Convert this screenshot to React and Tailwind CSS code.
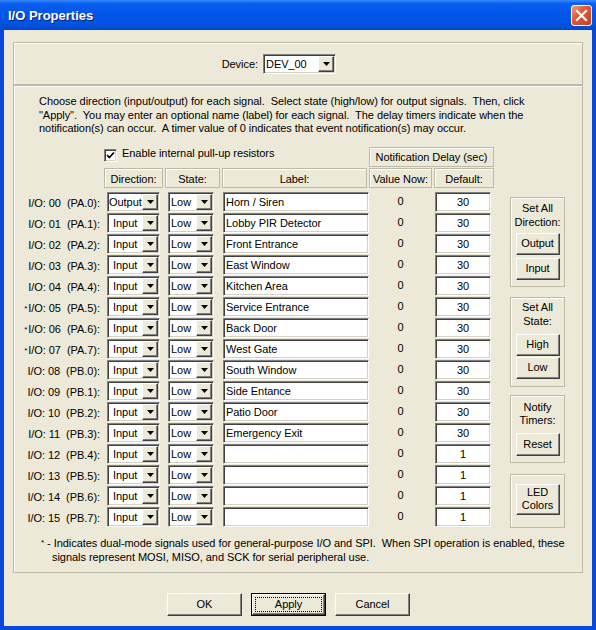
import React from "react";

const sunken =
  "border border-t-[#808080] border-l-[#808080] border-b-white border-r-white shadow-[inset_1px_1px_0_#404040,inset_-1px_-1px_0_#d4d0c8]";
const raised =
  "bg-[#ECE9D8] border border-t-white border-l-white border-b-[#404040] border-r-[#404040] shadow-[inset_-1px_-1px_0_#808080,inset_1px_1px_0_#ece9d8]";
const etched = "border border-[#BCB9A7] shadow-[inset_1px_1px_0_#ffffff]";

function Arrow() {
  return (
    <svg width="7" height="4" viewBox="0 0 7 4">
      <path d="M0 0h7l-3.5 4z" fill="#000" />
    </svg>
  );
}

function Combo({ w, text, pl }) {
  return (
    <div className={`${w} h-[20px] flex bg-white ${sunken}`}>
      <div className={`flex-1 overflow-hidden whitespace-nowrap leading-[19px] ${pl}`}>{text}</div>
      <div className={`w-[16px] h-[16px] mt-[1px] mr-[1px] flex items-center justify-center ${raised}`}>
        <Arrow />
      </div>
    </div>
  );
}

function TextBox({ w, text, extra }) {
  return (
    <div className={`${w} h-[20px] bg-white whitespace-nowrap overflow-hidden leading-[18px] ${sunken} ${extra}`}>
      {text}
    </div>
  );
}

function Btn({ cls, children }) {
  return <div className={`flex items-center justify-center text-center ${raised} ${cls}`}>{children}</div>;
}

const rows = [
  ["00", "PA.0", "Output", "Horn / Siren", "30", false],
  ["01", "PA.1", "Input", "Lobby PIR Detector", "30", false],
  ["02", "PA.2", "Input", "Front Entrance", "30", false],
  ["03", "PA.3", "Input", "East Window", "30", false],
  ["04", "PA.4", "Input", "Kitchen Area", "30", false],
  ["05", "PA.5", "Input", "Service Entrance", "30", true],
  ["06", "PA.6", "Input", "Back Door", "30", true],
  ["07", "PA.7", "Input", "West Gate", "30", true],
  ["08", "PB.0", "Input", "South Window", "30", false],
  ["09", "PB.1", "Input", "Side Entance", "30", false],
  ["10", "PB.2", "Input", "Patio Door", "30", false],
  ["11", "PB.3", "Input", "Emergency Exit", "30", false],
  ["12", "PB.4", "Input", "", "1", false],
  ["13", "PB.5", "Input", "", "1", false],
  ["14", "PB.6", "Input", "", "1", false],
  ["15", "PB.7", "Input", "", "1", false],
];

const gridCols = "grid grid-cols-[88px_59px_55px_145px_63px_60px] gap-x-[2px]";

export default function App() {
  return (
    <div className="w-[596px] h-[630px] flex flex-col bg-[#ECE9D8] text-black text-[11px] tracking-[-0.05px] font-['Liberation_Sans',sans-serif]">
      {/* Title bar */}
      <div className="h-[30px] shrink-0 flex items-center justify-between pl-[8px] pr-[4px] bg-[linear-gradient(to_bottom,#3A8CFF_0%,#0A5FF0_12%,#0056E8_45%,#0053E0_80%,#0046CC_100%)]">
        <div className="text-white font-bold text-[13px] tracking-normal mt-[1px] font-['Liberation_Sans',sans-serif] [text-shadow:1px_1px_0_#0A1F74]">
          I/O Properties
        </div>
        <div className="w-[21px] h-[21px] rounded-[3px] border border-white flex items-center justify-center bg-[linear-gradient(135deg,#F39C80_0%,#E0593A_40%,#C73E20_100%)]">
          <svg width="13" height="13" viewBox="0 0 13 13">
            <path d="M2 2L11 11M11 2L2 11" stroke="#fff" strokeWidth="2.2" strokeLinecap="square" />
          </svg>
        </div>
      </div>

      {/* Body */}
      <div className="flex-1 flex flex-col border-x-4 border-b-4 border-[#0A47DB]">
        {/* Device group */}
        <div className={`mt-[12px] mx-[9px] h-[43px] flex items-center ${etched}`}>
          <div className="w-[244px] text-right pt-[2px]">Device:</div>
          <div className="ml-[5px]">
            <Combo w="w-[73px]" text="DEV_00" pl="pl-[2px]" />
          </div>
        </div>

        {/* Main group */}
        <div className={`mx-[9px] h-[488px] flex flex-col ${etched}`}>
          <div className="pl-[25px] pt-[9px] leading-[13.5px] whitespace-pre">
            <div>Choose direction (input/output) for each signal.  Select state (high/low) for output signals.  Then, click</div>
            <div>"Apply".  You may enter an optional name (label) for each signal.  The delay timers indicate when the</div>
            <div>notification(s) can occur.  A timer value of 0 indicates that event notification(s) may occur.</div>
          </div>

          <div className="mt-[11px] flex">
            {/* Table */}
            <div className="w-[478px] flex flex-col">
              <div className={`${gridCols} h-[20px]`}>
                <div className="col-start-2 col-span-3 flex items-start pt-[2px]">
                  <div className={`w-[13px] h-[13px] bg-white flex items-center justify-center ${sunken}`}>
                    <svg width="9" height="9" viewBox="0 0 9 9">
                      <path d="M1 4L3.3 6.5L8 1.5" stroke="#000" strokeWidth="1.8" fill="none" />
                    </svg>
                  </div>
                  <div className="ml-[5px] leading-[12px] -mt-[2px] whitespace-nowrap">Enable internal pull-up resistors</div>
                </div>
                <div className={`col-start-5 col-span-2 flex items-center justify-center whitespace-nowrap pt-[1px] ${etched}`}>
                  Notification Delay (sec)
                </div>
              </div>
              <div className={`${gridCols} h-[20px] mt-[1px]`}>
                <div />
                <div className={`flex items-center justify-center pt-[2px] ${etched}`}>Direction:</div>
                <div className={`flex items-center justify-center pt-[2px] ${etched}`}>State:</div>
                <div className={`flex items-center justify-center pt-[2px] ${etched}`}>Label:</div>
                <div className={`flex items-center justify-center pt-[2px] whitespace-nowrap ${etched}`}>Value Now:</div>
                <div className={`flex items-center justify-center pt-[2px] ${etched}`}>Default:</div>
              </div>

              <div className="mt-[4px] flex flex-col gap-[1px]">
                {rows.map(([n, port, dir, label, def, star]) => (
                  <div key={n} className={`${gridCols} h-[20px]`}>
                    <div className="flex items-center justify-end pr-[2px] whitespace-pre pt-[3px]">
                      {star && <span className="text-[8px] self-start mt-[3px] mr-[1px]">*</span>}
                      <span>{`I/O: ${n}  (${port}):`}</span>
                    </div>
                    <div className="pl-[3px]">
                      <Combo w="w-[53px]" text={dir} pl={dir === "Output" ? "pl-[1px]" : "pl-[5px]"} />
                    </div>
                    <div className="pl-[3px]">
                      <Combo w="w-[46px]" text="Low" pl="pl-[2px]" />
                    </div>
                    <div className="pl-[1px]">
                      <TextBox w="w-[146px]" text={label} extra="pl-[2px]" />
                    </div>
                    <div className="flex justify-center leading-[18px]">0</div>
                    <div className="pl-[1px]">
                      <TextBox w="w-[56px]" text={def} extra="text-center" />
                    </div>
                  </div>
                ))}
              </div>
            </div>

            {/* Right panel */}
            <div className="ml-[18px] mt-[50px] w-[55px] flex flex-col text-center">
              <div className={`h-[90px] flex flex-col items-center pt-[3px] ${etched}`}>
                <div className="leading-[14px]">Set All<br />Direction:</div>
                <Btn cls="mt-[4px] w-[44px] h-[22px]">Output</Btn>
                <Btn cls="mt-[3px] w-[44px] h-[22px]">Input</Btn>
              </div>
              <div className={`mt-[10px] h-[90px] flex flex-col items-center pt-[2px] ${etched}`}>
                <div className="leading-[14px]">Set All<br />State:</div>
                <Btn cls="mt-[6px] w-[44px] h-[22px]">High</Btn>
                <Btn cls="mt-[1px] w-[44px] h-[22px]">Low</Btn>
              </div>
              <div className={`mt-[8px] h-[68px] flex flex-col items-center pt-[5px] ${etched}`}>
                <div className="leading-[13px]">Notify<br />Timers:</div>
                <Btn cls="mt-[6px] w-[44px] h-[23px]">Reset</Btn>
              </div>
              <div className={`mt-[11px] h-[54px] flex flex-col items-center pt-[9px] ${etched}`}>
                <Btn cls="w-[44px] h-[31px] leading-[13px]">
                  LED
                  <br />
                  Colors
                </Btn>
              </div>
            </div>
          </div>

          <div className="mt-[8px] pl-[27px] leading-[14px] whitespace-pre">
            <div>
              <span className="text-[8px] align-top">*</span> - Indicates dual-mode signals used for general-purpose I/O and SPI.  When SPI operation is enabled, these
            </div>
            <div className="pl-[11px]">signals represent MOSI, MISO, and SCK for serial peripheral use.</div>
          </div>
        </div>

        {/* Buttons */}
        <div className="mt-[20px] flex pl-[163px]">
          <Btn cls="w-[75px] h-[23px]">OK</Btn>
          <div className="ml-[9px] w-[75px] h-[23px] border border-black">
            <div className={`w-full h-full flex p-[2px] ${raised}`}>
              <div className="flex-1 border border-dotted border-black flex items-center justify-center">Apply</div>
            </div>
          </div>
          <Btn cls="ml-[9px] w-[75px] h-[23px]">Cancel</Btn>
        </div>
      </div>
    </div>
  );
}
